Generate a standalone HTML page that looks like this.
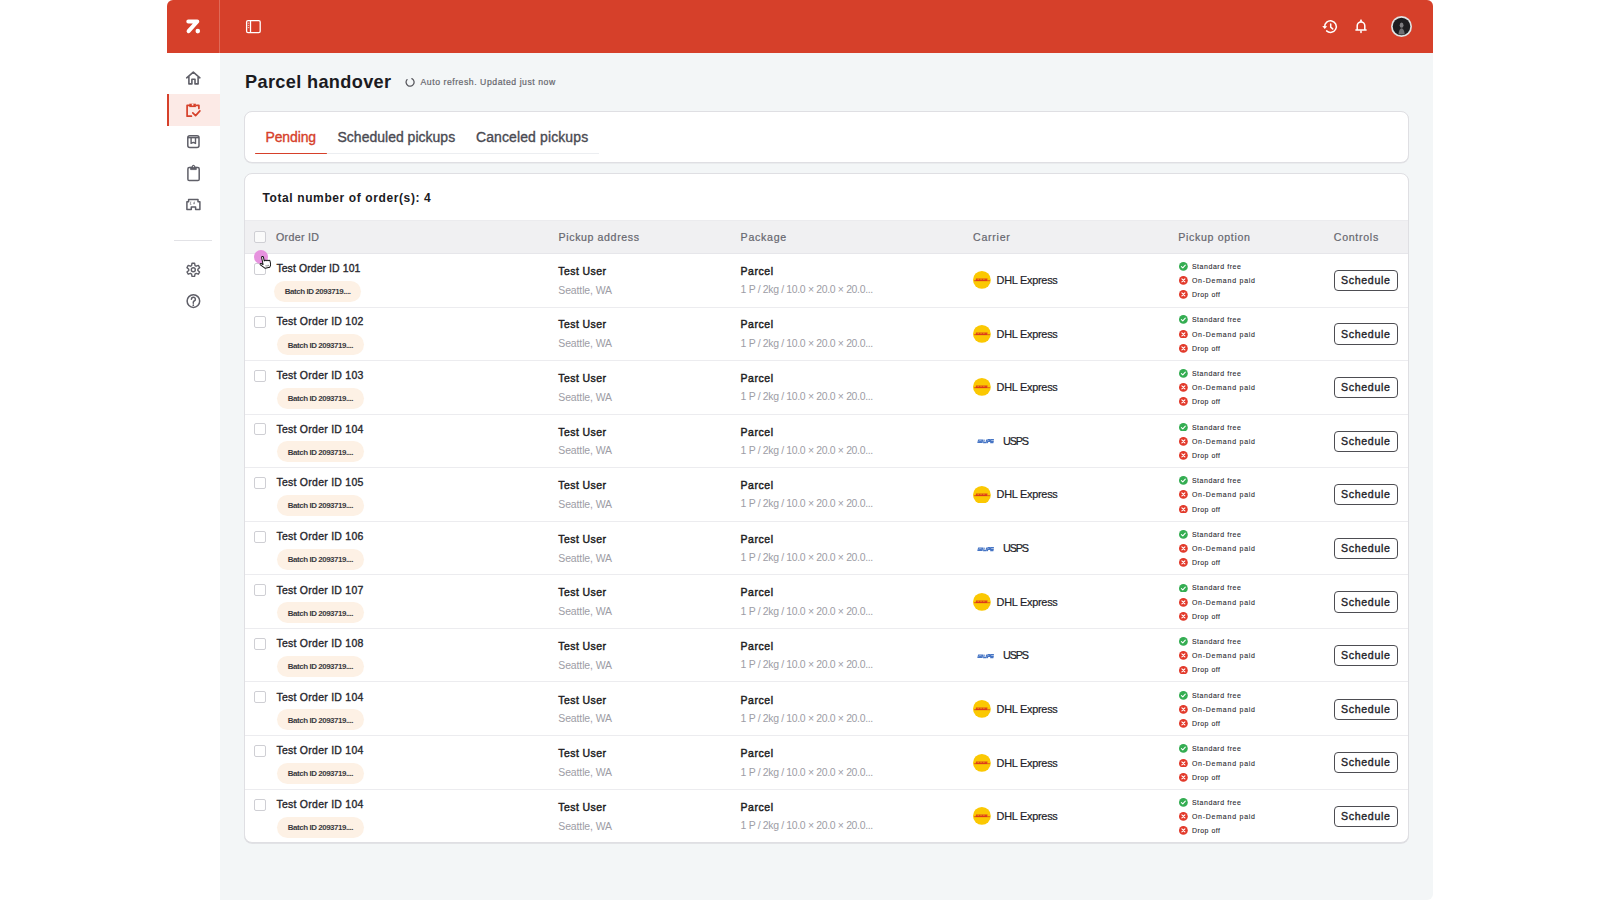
<!DOCTYPE html><html><head><meta charset="utf-8"><style>
*{margin:0;padding:0;box-sizing:border-box}
html,body{width:1600px;height:900px;overflow:hidden;background:#fff;font-family:"Liberation Sans",sans-serif}
.a{position:absolute}
.t{position:absolute;white-space:nowrap;line-height:1}
</style></head><body><div class="a" style="left:167px;top:0px;width:1266px;height:900px;background:#F3F6F7;border-radius:6px"></div><div class="a" style="left:167px;top:0px;width:1266px;height:53px;background:#D6402A;border-radius:6px 6px 0 0"></div><div class="a" style="left:219px;top:0px;width:1px;height:53px;background:rgba(255,255,255,0.22)"></div><div class="a" style="left:167px;top:53px;width:52.5px;height:847px;background:#fff"></div><div class="a" style="left:167px;top:94px;width:52.5px;height:32px;background:#FCEAE6"></div><div class="a" style="left:167px;top:94px;width:2px;height:32px;background:#D6402A"></div><div class="a" style="left:174px;top:240px;width:38px;height:1px;background:#e2e2e6"></div><div class="a" style="left:244px;top:111px;width:1164.5px;height:52px;background:#fff;border:1px solid #dfdfe3;border-radius:8px;box-shadow:0 0.6px 0 #e2e2e5"></div><div class="a" style="left:327px;top:153px;width:272px;height:1px;background:#eceef1"></div><div class="a" style="left:255px;top:152.6px;width:72px;height:1.6px;background:#D6402A;border-radius:1px"></div><div class="a" style="left:244px;top:173px;width:1164.5px;height:670px;background:#fff;border:1px solid #dfdfe3;border-radius:8px;overflow:hidden;box-shadow:0 0.8px 0 #dcdce0"></div><div class="a" style="left:245px;top:220px;width:1162.5px;height:33.5px;background:#F0F0F2;border-top:1px solid #ebebee;border-bottom:1px solid #e6e6ea"></div><div class="a" style="left:245px;top:306.55px;width:1162.5px;height:1px;background:#ececef"></div><div class="a" style="left:245px;top:360.1px;width:1162.5px;height:1px;background:#ececef"></div><div class="a" style="left:245px;top:413.65px;width:1162.5px;height:1px;background:#ececef"></div><div class="a" style="left:245px;top:467.2px;width:1162.5px;height:1px;background:#ececef"></div><div class="a" style="left:245px;top:520.75px;width:1162.5px;height:1px;background:#ececef"></div><div class="a" style="left:245px;top:574.3px;width:1162.5px;height:1px;background:#ececef"></div><div class="a" style="left:245px;top:627.8499999999999px;width:1162.5px;height:1px;background:#ececef"></div><div class="a" style="left:245px;top:681.4px;width:1162.5px;height:1px;background:#ececef"></div><div class="a" style="left:245px;top:734.95px;width:1162.5px;height:1px;background:#ececef"></div><div class="a" style="left:245px;top:788.5px;width:1162.5px;height:1px;background:#ececef"></div><div class="a" style="left:254px;top:231px;width:12px;height:12px;border:1px solid #cfcfd4;border-radius:2px;background:#fafafa"></div><div class="a" style="left:254px;top:262.5px;width:12px;height:12px;border:1px solid #cfcfd4;border-radius:2px;background:#fff"></div><div class="a" style="left:274.2px;top:280.5px;width:87px;height:21px;background:#FDF1E5;border-radius:11px"></div><svg class="a" style="left:973.2px;top:271.2px;" width="17.8" height="17.8" viewBox="0 0 17.8 17.8"><circle cx="8.9" cy="8.9" r="8.9" fill="#FBC802"/><path d="M1 9.7H17" stroke="#D9301E" stroke-width="0.7"/><path d="M3 7.6H14.6L14 9.9H2.6Z" fill="#D9301E" opacity="0.85"/><path d="M4.5 8.3H6M7.3 8.3H8.8M10.1 8.3H11.6" stroke="#FBC802" stroke-width="0.6"/></svg><svg class="a" style="left:1178.9px;top:261.8px;" width="8.8" height="8.8" viewBox="0 0 8.8 8.8"><circle cx="4.4" cy="4.4" r="4.4" fill="#34AD52"/><path d="M2.4 4.6L3.8 5.9L6.3 3.1" fill="none" stroke="#fff" stroke-width="1.1" stroke-linecap="round" stroke-linejoin="round"/></svg><svg class="a" style="left:1178.9px;top:276.0px;" width="8.8" height="8.8" viewBox="0 0 8.8 8.8"><circle cx="4.4" cy="4.4" r="4.4" fill="#E2392A"/><path d="M2.9 2.9L5.9 5.9M5.9 2.9L2.9 5.9" fill="none" stroke="#fff" stroke-width="1.1" stroke-linecap="round"/></svg><svg class="a" style="left:1178.9px;top:290.2px;" width="8.8" height="8.8" viewBox="0 0 8.8 8.8"><circle cx="4.4" cy="4.4" r="4.4" fill="#E2392A"/><path d="M2.9 2.9L5.9 5.9M5.9 2.9L2.9 5.9" fill="none" stroke="#fff" stroke-width="1.1" stroke-linecap="round"/></svg><div class="a" style="left:1333.5px;top:269.7px;width:64.3px;height:21.2px;border:1.2px solid #4d4d52;border-radius:4px;background:#fff"></div><div class="a" style="left:254px;top:316.12px;width:12px;height:12px;border:1px solid #cfcfd4;border-radius:2px;background:#fff"></div><div class="a" style="left:277px;top:334.12px;width:87px;height:21px;background:#FDF1E5;border-radius:11px"></div><svg class="a" style="left:973.2px;top:324.82px;" width="17.8" height="17.8" viewBox="0 0 17.8 17.8"><circle cx="8.9" cy="8.9" r="8.9" fill="#FBC802"/><path d="M1 9.7H17" stroke="#D9301E" stroke-width="0.7"/><path d="M3 7.6H14.6L14 9.9H2.6Z" fill="#D9301E" opacity="0.85"/><path d="M4.5 8.3H6M7.3 8.3H8.8M10.1 8.3H11.6" stroke="#FBC802" stroke-width="0.6"/></svg><svg class="a" style="left:1178.9px;top:315.42px;" width="8.8" height="8.8" viewBox="0 0 8.8 8.8"><circle cx="4.4" cy="4.4" r="4.4" fill="#34AD52"/><path d="M2.4 4.6L3.8 5.9L6.3 3.1" fill="none" stroke="#fff" stroke-width="1.1" stroke-linecap="round" stroke-linejoin="round"/></svg><svg class="a" style="left:1178.9px;top:329.62px;" width="8.8" height="8.8" viewBox="0 0 8.8 8.8"><circle cx="4.4" cy="4.4" r="4.4" fill="#E2392A"/><path d="M2.9 2.9L5.9 5.9M5.9 2.9L2.9 5.9" fill="none" stroke="#fff" stroke-width="1.1" stroke-linecap="round"/></svg><svg class="a" style="left:1178.9px;top:343.82px;" width="8.8" height="8.8" viewBox="0 0 8.8 8.8"><circle cx="4.4" cy="4.4" r="4.4" fill="#E2392A"/><path d="M2.9 2.9L5.9 5.9M5.9 2.9L2.9 5.9" fill="none" stroke="#fff" stroke-width="1.1" stroke-linecap="round"/></svg><div class="a" style="left:1333.5px;top:323.32px;width:64.3px;height:21.2px;border:1.2px solid #4d4d52;border-radius:4px;background:#fff"></div><div class="a" style="left:254px;top:369.74px;width:12px;height:12px;border:1px solid #cfcfd4;border-radius:2px;background:#fff"></div><div class="a" style="left:277px;top:387.74px;width:87px;height:21px;background:#FDF1E5;border-radius:11px"></div><svg class="a" style="left:973.2px;top:378.44px;" width="17.8" height="17.8" viewBox="0 0 17.8 17.8"><circle cx="8.9" cy="8.9" r="8.9" fill="#FBC802"/><path d="M1 9.7H17" stroke="#D9301E" stroke-width="0.7"/><path d="M3 7.6H14.6L14 9.9H2.6Z" fill="#D9301E" opacity="0.85"/><path d="M4.5 8.3H6M7.3 8.3H8.8M10.1 8.3H11.6" stroke="#FBC802" stroke-width="0.6"/></svg><svg class="a" style="left:1178.9px;top:369.04px;" width="8.8" height="8.8" viewBox="0 0 8.8 8.8"><circle cx="4.4" cy="4.4" r="4.4" fill="#34AD52"/><path d="M2.4 4.6L3.8 5.9L6.3 3.1" fill="none" stroke="#fff" stroke-width="1.1" stroke-linecap="round" stroke-linejoin="round"/></svg><svg class="a" style="left:1178.9px;top:383.24px;" width="8.8" height="8.8" viewBox="0 0 8.8 8.8"><circle cx="4.4" cy="4.4" r="4.4" fill="#E2392A"/><path d="M2.9 2.9L5.9 5.9M5.9 2.9L2.9 5.9" fill="none" stroke="#fff" stroke-width="1.1" stroke-linecap="round"/></svg><svg class="a" style="left:1178.9px;top:397.44px;" width="8.8" height="8.8" viewBox="0 0 8.8 8.8"><circle cx="4.4" cy="4.4" r="4.4" fill="#E2392A"/><path d="M2.9 2.9L5.9 5.9M5.9 2.9L2.9 5.9" fill="none" stroke="#fff" stroke-width="1.1" stroke-linecap="round"/></svg><div class="a" style="left:1333.5px;top:376.94px;width:64.3px;height:21.2px;border:1.2px solid #4d4d52;border-radius:4px;background:#fff"></div><div class="a" style="left:254px;top:423.36px;width:12px;height:12px;border:1px solid #cfcfd4;border-radius:2px;background:#fff"></div><div class="a" style="left:277px;top:441.36px;width:87px;height:21px;background:#FDF1E5;border-radius:11px"></div><svg class="a" style="left:976.5px;top:439.26px;" width="18" height="5" viewBox="0 0 18 5"><path d="M0.3 4.1L1.1 0.6H6.2L5.6 4.1Z" fill="#4574c4"/><path d="M1.5 2.3C2.3 1.5 3.6 1.4 4.6 1.9" stroke="#c9d6ee" stroke-width="0.6" fill="none"/><path d="M7.2 0.6L6.7 3.6H9.1L9.6 0.6M10.4 4.1L11 0.6H12.8L12.5 2.3H10.9M13.6 0.6H16.9M13.8 0.6L13.5 2.3H16.2L15.9 3.6H13.2" fill="none" stroke="#4574c4" stroke-width="1.15"/></svg><svg class="a" style="left:1178.9px;top:422.66px;" width="8.8" height="8.8" viewBox="0 0 8.8 8.8"><circle cx="4.4" cy="4.4" r="4.4" fill="#34AD52"/><path d="M2.4 4.6L3.8 5.9L6.3 3.1" fill="none" stroke="#fff" stroke-width="1.1" stroke-linecap="round" stroke-linejoin="round"/></svg><svg class="a" style="left:1178.9px;top:436.86px;" width="8.8" height="8.8" viewBox="0 0 8.8 8.8"><circle cx="4.4" cy="4.4" r="4.4" fill="#E2392A"/><path d="M2.9 2.9L5.9 5.9M5.9 2.9L2.9 5.9" fill="none" stroke="#fff" stroke-width="1.1" stroke-linecap="round"/></svg><svg class="a" style="left:1178.9px;top:451.06px;" width="8.8" height="8.8" viewBox="0 0 8.8 8.8"><circle cx="4.4" cy="4.4" r="4.4" fill="#E2392A"/><path d="M2.9 2.9L5.9 5.9M5.9 2.9L2.9 5.9" fill="none" stroke="#fff" stroke-width="1.1" stroke-linecap="round"/></svg><div class="a" style="left:1333.5px;top:430.56px;width:64.3px;height:21.2px;border:1.2px solid #4d4d52;border-radius:4px;background:#fff"></div><div class="a" style="left:254px;top:476.98px;width:12px;height:12px;border:1px solid #cfcfd4;border-radius:2px;background:#fff"></div><div class="a" style="left:277px;top:494.98px;width:87px;height:21px;background:#FDF1E5;border-radius:11px"></div><svg class="a" style="left:973.2px;top:485.68px;" width="17.8" height="17.8" viewBox="0 0 17.8 17.8"><circle cx="8.9" cy="8.9" r="8.9" fill="#FBC802"/><path d="M1 9.7H17" stroke="#D9301E" stroke-width="0.7"/><path d="M3 7.6H14.6L14 9.9H2.6Z" fill="#D9301E" opacity="0.85"/><path d="M4.5 8.3H6M7.3 8.3H8.8M10.1 8.3H11.6" stroke="#FBC802" stroke-width="0.6"/></svg><svg class="a" style="left:1178.9px;top:476.28000000000003px;" width="8.8" height="8.8" viewBox="0 0 8.8 8.8"><circle cx="4.4" cy="4.4" r="4.4" fill="#34AD52"/><path d="M2.4 4.6L3.8 5.9L6.3 3.1" fill="none" stroke="#fff" stroke-width="1.1" stroke-linecap="round" stroke-linejoin="round"/></svg><svg class="a" style="left:1178.9px;top:490.48px;" width="8.8" height="8.8" viewBox="0 0 8.8 8.8"><circle cx="4.4" cy="4.4" r="4.4" fill="#E2392A"/><path d="M2.9 2.9L5.9 5.9M5.9 2.9L2.9 5.9" fill="none" stroke="#fff" stroke-width="1.1" stroke-linecap="round"/></svg><svg class="a" style="left:1178.9px;top:504.68px;" width="8.8" height="8.8" viewBox="0 0 8.8 8.8"><circle cx="4.4" cy="4.4" r="4.4" fill="#E2392A"/><path d="M2.9 2.9L5.9 5.9M5.9 2.9L2.9 5.9" fill="none" stroke="#fff" stroke-width="1.1" stroke-linecap="round"/></svg><div class="a" style="left:1333.5px;top:484.18px;width:64.3px;height:21.2px;border:1.2px solid #4d4d52;border-radius:4px;background:#fff"></div><div class="a" style="left:254px;top:530.5999999999999px;width:12px;height:12px;border:1px solid #cfcfd4;border-radius:2px;background:#fff"></div><div class="a" style="left:277px;top:548.5999999999999px;width:87px;height:21px;background:#FDF1E5;border-radius:11px"></div><svg class="a" style="left:976.5px;top:546.4999999999999px;" width="18" height="5" viewBox="0 0 18 5"><path d="M0.3 4.1L1.1 0.6H6.2L5.6 4.1Z" fill="#4574c4"/><path d="M1.5 2.3C2.3 1.5 3.6 1.4 4.6 1.9" stroke="#c9d6ee" stroke-width="0.6" fill="none"/><path d="M7.2 0.6L6.7 3.6H9.1L9.6 0.6M10.4 4.1L11 0.6H12.8L12.5 2.3H10.9M13.6 0.6H16.9M13.8 0.6L13.5 2.3H16.2L15.9 3.6H13.2" fill="none" stroke="#4574c4" stroke-width="1.15"/></svg><svg class="a" style="left:1178.9px;top:529.8999999999999px;" width="8.8" height="8.8" viewBox="0 0 8.8 8.8"><circle cx="4.4" cy="4.4" r="4.4" fill="#34AD52"/><path d="M2.4 4.6L3.8 5.9L6.3 3.1" fill="none" stroke="#fff" stroke-width="1.1" stroke-linecap="round" stroke-linejoin="round"/></svg><svg class="a" style="left:1178.9px;top:544.0999999999999px;" width="8.8" height="8.8" viewBox="0 0 8.8 8.8"><circle cx="4.4" cy="4.4" r="4.4" fill="#E2392A"/><path d="M2.9 2.9L5.9 5.9M5.9 2.9L2.9 5.9" fill="none" stroke="#fff" stroke-width="1.1" stroke-linecap="round"/></svg><svg class="a" style="left:1178.9px;top:558.3px;" width="8.8" height="8.8" viewBox="0 0 8.8 8.8"><circle cx="4.4" cy="4.4" r="4.4" fill="#E2392A"/><path d="M2.9 2.9L5.9 5.9M5.9 2.9L2.9 5.9" fill="none" stroke="#fff" stroke-width="1.1" stroke-linecap="round"/></svg><div class="a" style="left:1333.5px;top:537.8px;width:64.3px;height:21.2px;border:1.2px solid #4d4d52;border-radius:4px;background:#fff"></div><div class="a" style="left:254px;top:584.22px;width:12px;height:12px;border:1px solid #cfcfd4;border-radius:2px;background:#fff"></div><div class="a" style="left:277px;top:602.22px;width:87px;height:21px;background:#FDF1E5;border-radius:11px"></div><svg class="a" style="left:973.2px;top:592.9200000000001px;" width="17.8" height="17.8" viewBox="0 0 17.8 17.8"><circle cx="8.9" cy="8.9" r="8.9" fill="#FBC802"/><path d="M1 9.7H17" stroke="#D9301E" stroke-width="0.7"/><path d="M3 7.6H14.6L14 9.9H2.6Z" fill="#D9301E" opacity="0.85"/><path d="M4.5 8.3H6M7.3 8.3H8.8M10.1 8.3H11.6" stroke="#FBC802" stroke-width="0.6"/></svg><svg class="a" style="left:1178.9px;top:583.52px;" width="8.8" height="8.8" viewBox="0 0 8.8 8.8"><circle cx="4.4" cy="4.4" r="4.4" fill="#34AD52"/><path d="M2.4 4.6L3.8 5.9L6.3 3.1" fill="none" stroke="#fff" stroke-width="1.1" stroke-linecap="round" stroke-linejoin="round"/></svg><svg class="a" style="left:1178.9px;top:597.72px;" width="8.8" height="8.8" viewBox="0 0 8.8 8.8"><circle cx="4.4" cy="4.4" r="4.4" fill="#E2392A"/><path d="M2.9 2.9L5.9 5.9M5.9 2.9L2.9 5.9" fill="none" stroke="#fff" stroke-width="1.1" stroke-linecap="round"/></svg><svg class="a" style="left:1178.9px;top:611.9200000000001px;" width="8.8" height="8.8" viewBox="0 0 8.8 8.8"><circle cx="4.4" cy="4.4" r="4.4" fill="#E2392A"/><path d="M2.9 2.9L5.9 5.9M5.9 2.9L2.9 5.9" fill="none" stroke="#fff" stroke-width="1.1" stroke-linecap="round"/></svg><div class="a" style="left:1333.5px;top:591.4200000000001px;width:64.3px;height:21.2px;border:1.2px solid #4d4d52;border-radius:4px;background:#fff"></div><div class="a" style="left:254px;top:637.8399999999999px;width:12px;height:12px;border:1px solid #cfcfd4;border-radius:2px;background:#fff"></div><div class="a" style="left:277px;top:655.8399999999999px;width:87px;height:21px;background:#FDF1E5;border-radius:11px"></div><svg class="a" style="left:976.5px;top:653.7399999999999px;" width="18" height="5" viewBox="0 0 18 5"><path d="M0.3 4.1L1.1 0.6H6.2L5.6 4.1Z" fill="#4574c4"/><path d="M1.5 2.3C2.3 1.5 3.6 1.4 4.6 1.9" stroke="#c9d6ee" stroke-width="0.6" fill="none"/><path d="M7.2 0.6L6.7 3.6H9.1L9.6 0.6M10.4 4.1L11 0.6H12.8L12.5 2.3H10.9M13.6 0.6H16.9M13.8 0.6L13.5 2.3H16.2L15.9 3.6H13.2" fill="none" stroke="#4574c4" stroke-width="1.15"/></svg><svg class="a" style="left:1178.9px;top:637.1399999999999px;" width="8.8" height="8.8" viewBox="0 0 8.8 8.8"><circle cx="4.4" cy="4.4" r="4.4" fill="#34AD52"/><path d="M2.4 4.6L3.8 5.9L6.3 3.1" fill="none" stroke="#fff" stroke-width="1.1" stroke-linecap="round" stroke-linejoin="round"/></svg><svg class="a" style="left:1178.9px;top:651.3399999999999px;" width="8.8" height="8.8" viewBox="0 0 8.8 8.8"><circle cx="4.4" cy="4.4" r="4.4" fill="#E2392A"/><path d="M2.9 2.9L5.9 5.9M5.9 2.9L2.9 5.9" fill="none" stroke="#fff" stroke-width="1.1" stroke-linecap="round"/></svg><svg class="a" style="left:1178.9px;top:665.54px;" width="8.8" height="8.8" viewBox="0 0 8.8 8.8"><circle cx="4.4" cy="4.4" r="4.4" fill="#E2392A"/><path d="M2.9 2.9L5.9 5.9M5.9 2.9L2.9 5.9" fill="none" stroke="#fff" stroke-width="1.1" stroke-linecap="round"/></svg><div class="a" style="left:1333.5px;top:645.04px;width:64.3px;height:21.2px;border:1.2px solid #4d4d52;border-radius:4px;background:#fff"></div><div class="a" style="left:254px;top:691.46px;width:12px;height:12px;border:1px solid #cfcfd4;border-radius:2px;background:#fff"></div><div class="a" style="left:277px;top:709.46px;width:87px;height:21px;background:#FDF1E5;border-radius:11px"></div><svg class="a" style="left:973.2px;top:700.1600000000001px;" width="17.8" height="17.8" viewBox="0 0 17.8 17.8"><circle cx="8.9" cy="8.9" r="8.9" fill="#FBC802"/><path d="M1 9.7H17" stroke="#D9301E" stroke-width="0.7"/><path d="M3 7.6H14.6L14 9.9H2.6Z" fill="#D9301E" opacity="0.85"/><path d="M4.5 8.3H6M7.3 8.3H8.8M10.1 8.3H11.6" stroke="#FBC802" stroke-width="0.6"/></svg><svg class="a" style="left:1178.9px;top:690.76px;" width="8.8" height="8.8" viewBox="0 0 8.8 8.8"><circle cx="4.4" cy="4.4" r="4.4" fill="#34AD52"/><path d="M2.4 4.6L3.8 5.9L6.3 3.1" fill="none" stroke="#fff" stroke-width="1.1" stroke-linecap="round" stroke-linejoin="round"/></svg><svg class="a" style="left:1178.9px;top:704.96px;" width="8.8" height="8.8" viewBox="0 0 8.8 8.8"><circle cx="4.4" cy="4.4" r="4.4" fill="#E2392A"/><path d="M2.9 2.9L5.9 5.9M5.9 2.9L2.9 5.9" fill="none" stroke="#fff" stroke-width="1.1" stroke-linecap="round"/></svg><svg class="a" style="left:1178.9px;top:719.1600000000001px;" width="8.8" height="8.8" viewBox="0 0 8.8 8.8"><circle cx="4.4" cy="4.4" r="4.4" fill="#E2392A"/><path d="M2.9 2.9L5.9 5.9M5.9 2.9L2.9 5.9" fill="none" stroke="#fff" stroke-width="1.1" stroke-linecap="round"/></svg><div class="a" style="left:1333.5px;top:698.6600000000001px;width:64.3px;height:21.2px;border:1.2px solid #4d4d52;border-radius:4px;background:#fff"></div><div class="a" style="left:254px;top:745.0799999999999px;width:12px;height:12px;border:1px solid #cfcfd4;border-radius:2px;background:#fff"></div><div class="a" style="left:277px;top:763.0799999999999px;width:87px;height:21px;background:#FDF1E5;border-radius:11px"></div><svg class="a" style="left:973.2px;top:753.78px;" width="17.8" height="17.8" viewBox="0 0 17.8 17.8"><circle cx="8.9" cy="8.9" r="8.9" fill="#FBC802"/><path d="M1 9.7H17" stroke="#D9301E" stroke-width="0.7"/><path d="M3 7.6H14.6L14 9.9H2.6Z" fill="#D9301E" opacity="0.85"/><path d="M4.5 8.3H6M7.3 8.3H8.8M10.1 8.3H11.6" stroke="#FBC802" stroke-width="0.6"/></svg><svg class="a" style="left:1178.9px;top:744.3799999999999px;" width="8.8" height="8.8" viewBox="0 0 8.8 8.8"><circle cx="4.4" cy="4.4" r="4.4" fill="#34AD52"/><path d="M2.4 4.6L3.8 5.9L6.3 3.1" fill="none" stroke="#fff" stroke-width="1.1" stroke-linecap="round" stroke-linejoin="round"/></svg><svg class="a" style="left:1178.9px;top:758.5799999999999px;" width="8.8" height="8.8" viewBox="0 0 8.8 8.8"><circle cx="4.4" cy="4.4" r="4.4" fill="#E2392A"/><path d="M2.9 2.9L5.9 5.9M5.9 2.9L2.9 5.9" fill="none" stroke="#fff" stroke-width="1.1" stroke-linecap="round"/></svg><svg class="a" style="left:1178.9px;top:772.78px;" width="8.8" height="8.8" viewBox="0 0 8.8 8.8"><circle cx="4.4" cy="4.4" r="4.4" fill="#E2392A"/><path d="M2.9 2.9L5.9 5.9M5.9 2.9L2.9 5.9" fill="none" stroke="#fff" stroke-width="1.1" stroke-linecap="round"/></svg><div class="a" style="left:1333.5px;top:752.28px;width:64.3px;height:21.2px;border:1.2px solid #4d4d52;border-radius:4px;background:#fff"></div><div class="a" style="left:254px;top:798.6999999999999px;width:12px;height:12px;border:1px solid #cfcfd4;border-radius:2px;background:#fff"></div><div class="a" style="left:277px;top:816.6999999999999px;width:87px;height:21px;background:#FDF1E5;border-radius:11px"></div><svg class="a" style="left:973.2px;top:807.4px;" width="17.8" height="17.8" viewBox="0 0 17.8 17.8"><circle cx="8.9" cy="8.9" r="8.9" fill="#FBC802"/><path d="M1 9.7H17" stroke="#D9301E" stroke-width="0.7"/><path d="M3 7.6H14.6L14 9.9H2.6Z" fill="#D9301E" opacity="0.85"/><path d="M4.5 8.3H6M7.3 8.3H8.8M10.1 8.3H11.6" stroke="#FBC802" stroke-width="0.6"/></svg><svg class="a" style="left:1178.9px;top:797.9999999999999px;" width="8.8" height="8.8" viewBox="0 0 8.8 8.8"><circle cx="4.4" cy="4.4" r="4.4" fill="#34AD52"/><path d="M2.4 4.6L3.8 5.9L6.3 3.1" fill="none" stroke="#fff" stroke-width="1.1" stroke-linecap="round" stroke-linejoin="round"/></svg><svg class="a" style="left:1178.9px;top:812.1999999999999px;" width="8.8" height="8.8" viewBox="0 0 8.8 8.8"><circle cx="4.4" cy="4.4" r="4.4" fill="#E2392A"/><path d="M2.9 2.9L5.9 5.9M5.9 2.9L2.9 5.9" fill="none" stroke="#fff" stroke-width="1.1" stroke-linecap="round"/></svg><svg class="a" style="left:1178.9px;top:826.4px;" width="8.8" height="8.8" viewBox="0 0 8.8 8.8"><circle cx="4.4" cy="4.4" r="4.4" fill="#E2392A"/><path d="M2.9 2.9L5.9 5.9M5.9 2.9L2.9 5.9" fill="none" stroke="#fff" stroke-width="1.1" stroke-linecap="round"/></svg><div class="a" style="left:1333.5px;top:805.9px;width:64.3px;height:21.2px;border:1.2px solid #4d4d52;border-radius:4px;background:#fff"></div><span class="t" style="left:245.00px;top:73.00px;font-size:18.16px;font-weight:700;color:#1b1b1f;letter-spacing:0.345px;">Parcel handover</span><span class="t" style="left:420.50px;top:78.00px;font-size:8.66px;font-weight:400;color:#66666d;letter-spacing:0.547px;-webkit-text-stroke:0.2px currentColor;">Auto refresh. Updated just now</span><span class="t" style="left:265.50px;top:131.00px;font-size:13.97px;font-weight:400;color:#D6402A;letter-spacing:-0.120px;-webkit-text-stroke:0.35px currentColor;">Pending</span><span class="t" style="left:337.50px;top:131.00px;font-size:13.97px;font-weight:400;color:#4a4a52;letter-spacing:0.022px;-webkit-text-stroke:0.35px currentColor;">Scheduled pickups</span><span class="t" style="left:476.00px;top:131.00px;font-size:13.97px;font-weight:400;color:#4a4a52;letter-spacing:0.124px;-webkit-text-stroke:0.35px currentColor;">Canceled pickups</span><span class="t" style="left:262.50px;top:192.00px;font-size:12.01px;font-weight:700;color:#1b1b1f;letter-spacing:0.606px;">Total number of order(s): 4</span><span class="t" style="left:276.00px;top:232.00px;font-size:10.61px;font-weight:400;color:#66666e;letter-spacing:0.330px;-webkit-text-stroke:0.2px currentColor;">Order ID</span><span class="t" style="left:558.60px;top:232.00px;font-size:10.61px;font-weight:400;color:#66666e;letter-spacing:0.604px;-webkit-text-stroke:0.2px currentColor;">Pickup address</span><span class="t" style="left:740.60px;top:232.00px;font-size:10.61px;font-weight:400;color:#66666e;letter-spacing:0.726px;-webkit-text-stroke:0.2px currentColor;">Package</span><span class="t" style="left:973.00px;top:232.00px;font-size:10.61px;font-weight:400;color:#66666e;letter-spacing:0.746px;-webkit-text-stroke:0.2px currentColor;">Carrier</span><span class="t" style="left:1178.20px;top:232.00px;font-size:10.61px;font-weight:400;color:#66666e;letter-spacing:0.675px;-webkit-text-stroke:0.2px currentColor;">Pickup option</span><span class="t" style="left:1333.80px;top:232.00px;font-size:10.61px;font-weight:400;color:#66666e;letter-spacing:0.698px;-webkit-text-stroke:0.2px currentColor;">Controls</span><span class="t" style="left:276.40px;top:264.00px;font-size:10.47px;font-weight:400;color:#28282e;letter-spacing:0.086px;-webkit-text-stroke:0.35px currentColor;">Test Order ID 101</span><span class="t" style="left:284.70px;top:288.00px;font-size:7.96px;font-weight:700;color:#3a3a40;letter-spacing:-0.425px;">Batch ID 2093719....</span><span class="t" style="left:558.30px;top:267.00px;font-size:10.47px;font-weight:400;color:#1f1f24;letter-spacing:0.435px;-webkit-text-stroke:0.45px currentColor;">Test User</span><span class="t" style="left:558.30px;top:286.00px;font-size:10.47px;font-weight:400;color:#9d9da5;letter-spacing:-0.119px;">Seattle, WA</span><span class="t" style="left:740.60px;top:267.00px;font-size:10.47px;font-weight:400;color:#1f1f24;letter-spacing:0.542px;-webkit-text-stroke:0.45px currentColor;">Parcel</span><span class="t" style="left:740.60px;top:285.00px;font-size:10.47px;font-weight:400;color:#9d9da5;letter-spacing:-0.343px;">1 P / 2kg / 10.0 × 20.0 × 20.0...</span><span class="t" style="left:996.60px;top:275.00px;font-size:10.89px;font-weight:400;color:#222228;letter-spacing:-0.247px;-webkit-text-stroke:0.2px currentColor;">DHL Express</span><span class="t" style="left:1191.90px;top:263.00px;font-size:6.98px;font-weight:400;color:#2a2a30;letter-spacing:0.564px;-webkit-text-stroke:0.1px currentColor;">Standard free</span><span class="t" style="left:1191.90px;top:277.00px;font-size:6.98px;font-weight:400;color:#2a2a30;letter-spacing:0.771px;-webkit-text-stroke:0.1px currentColor;">On-Demand paid</span><span class="t" style="left:1191.90px;top:291.00px;font-size:6.98px;font-weight:400;color:#2a2a30;letter-spacing:0.490px;-webkit-text-stroke:0.1px currentColor;">Drop off</span><span class="t" style="left:1341.00px;top:275.00px;font-size:10.61px;font-weight:400;color:#222228;letter-spacing:0.664px;-webkit-text-stroke:0.35px currentColor;">Schedule</span><span class="t" style="left:276.40px;top:317.00px;font-size:10.47px;font-weight:400;color:#28282e;letter-spacing:0.273px;-webkit-text-stroke:0.35px currentColor;">Test Order ID 102</span><span class="t" style="left:287.80px;top:342.00px;font-size:7.96px;font-weight:700;color:#3a3a40;letter-spacing:-0.452px;">Batch ID 2093719....</span><span class="t" style="left:558.30px;top:320.00px;font-size:10.47px;font-weight:400;color:#1f1f24;letter-spacing:0.435px;-webkit-text-stroke:0.45px currentColor;">Test User</span><span class="t" style="left:558.30px;top:339.00px;font-size:10.47px;font-weight:400;color:#9d9da5;letter-spacing:-0.119px;">Seattle, WA</span><span class="t" style="left:740.60px;top:320.00px;font-size:10.47px;font-weight:400;color:#1f1f24;letter-spacing:0.542px;-webkit-text-stroke:0.45px currentColor;">Parcel</span><span class="t" style="left:740.60px;top:339.00px;font-size:10.47px;font-weight:400;color:#9d9da5;letter-spacing:-0.343px;">1 P / 2kg / 10.0 × 20.0 × 20.0...</span><span class="t" style="left:996.60px;top:329.00px;font-size:10.89px;font-weight:400;color:#222228;letter-spacing:-0.247px;-webkit-text-stroke:0.2px currentColor;">DHL Express</span><span class="t" style="left:1191.90px;top:316.00px;font-size:6.98px;font-weight:400;color:#2a2a30;letter-spacing:0.564px;-webkit-text-stroke:0.1px currentColor;">Standard free</span><span class="t" style="left:1191.90px;top:331.00px;font-size:6.98px;font-weight:400;color:#2a2a30;letter-spacing:0.771px;-webkit-text-stroke:0.1px currentColor;">On-Demand paid</span><span class="t" style="left:1191.90px;top:345.00px;font-size:6.98px;font-weight:400;color:#2a2a30;letter-spacing:0.490px;-webkit-text-stroke:0.1px currentColor;">Drop off</span><span class="t" style="left:1341.00px;top:329.00px;font-size:10.61px;font-weight:400;color:#222228;letter-spacing:0.664px;-webkit-text-stroke:0.35px currentColor;">Schedule</span><span class="t" style="left:276.40px;top:371.00px;font-size:10.47px;font-weight:400;color:#28282e;letter-spacing:0.273px;-webkit-text-stroke:0.35px currentColor;">Test Order ID 103</span><span class="t" style="left:287.80px;top:395.00px;font-size:7.96px;font-weight:700;color:#3a3a40;letter-spacing:-0.452px;">Batch ID 2093719....</span><span class="t" style="left:558.30px;top:374.00px;font-size:10.47px;font-weight:400;color:#1f1f24;letter-spacing:0.435px;-webkit-text-stroke:0.45px currentColor;">Test User</span><span class="t" style="left:558.30px;top:393.00px;font-size:10.47px;font-weight:400;color:#9d9da5;letter-spacing:-0.119px;">Seattle, WA</span><span class="t" style="left:740.60px;top:374.00px;font-size:10.47px;font-weight:400;color:#1f1f24;letter-spacing:0.542px;-webkit-text-stroke:0.45px currentColor;">Parcel</span><span class="t" style="left:740.60px;top:392.00px;font-size:10.47px;font-weight:400;color:#9d9da5;letter-spacing:-0.343px;">1 P / 2kg / 10.0 × 20.0 × 20.0...</span><span class="t" style="left:996.60px;top:382.00px;font-size:10.89px;font-weight:400;color:#222228;letter-spacing:-0.247px;-webkit-text-stroke:0.2px currentColor;">DHL Express</span><span class="t" style="left:1191.90px;top:370.00px;font-size:6.98px;font-weight:400;color:#2a2a30;letter-spacing:0.564px;-webkit-text-stroke:0.1px currentColor;">Standard free</span><span class="t" style="left:1191.90px;top:384.00px;font-size:6.98px;font-weight:400;color:#2a2a30;letter-spacing:0.771px;-webkit-text-stroke:0.1px currentColor;">On-Demand paid</span><span class="t" style="left:1191.90px;top:398.00px;font-size:6.98px;font-weight:400;color:#2a2a30;letter-spacing:0.490px;-webkit-text-stroke:0.1px currentColor;">Drop off</span><span class="t" style="left:1341.00px;top:382.00px;font-size:10.61px;font-weight:400;color:#222228;letter-spacing:0.664px;-webkit-text-stroke:0.35px currentColor;">Schedule</span><span class="t" style="left:276.40px;top:425.00px;font-size:10.47px;font-weight:400;color:#28282e;letter-spacing:0.273px;-webkit-text-stroke:0.35px currentColor;">Test Order ID 104</span><span class="t" style="left:287.80px;top:449.00px;font-size:7.96px;font-weight:700;color:#3a3a40;letter-spacing:-0.452px;">Batch ID 2093719....</span><span class="t" style="left:558.30px;top:428.00px;font-size:10.47px;font-weight:400;color:#1f1f24;letter-spacing:0.435px;-webkit-text-stroke:0.45px currentColor;">Test User</span><span class="t" style="left:558.30px;top:446.00px;font-size:10.47px;font-weight:400;color:#9d9da5;letter-spacing:-0.119px;">Seattle, WA</span><span class="t" style="left:740.60px;top:428.00px;font-size:10.47px;font-weight:400;color:#1f1f24;letter-spacing:0.542px;-webkit-text-stroke:0.45px currentColor;">Parcel</span><span class="t" style="left:740.60px;top:446.00px;font-size:10.47px;font-weight:400;color:#9d9da5;letter-spacing:-0.343px;">1 P / 2kg / 10.0 × 20.0 × 20.0...</span><span class="t" style="left:1003.00px;top:436.00px;font-size:10.89px;font-weight:400;color:#222228;letter-spacing:-1.208px;-webkit-text-stroke:0.2px currentColor;">USPS</span><span class="t" style="left:1191.90px;top:424.00px;font-size:6.98px;font-weight:400;color:#2a2a30;letter-spacing:0.564px;-webkit-text-stroke:0.1px currentColor;">Standard free</span><span class="t" style="left:1191.90px;top:438.00px;font-size:6.98px;font-weight:400;color:#2a2a30;letter-spacing:0.771px;-webkit-text-stroke:0.1px currentColor;">On-Demand paid</span><span class="t" style="left:1191.90px;top:452.00px;font-size:6.98px;font-weight:400;color:#2a2a30;letter-spacing:0.490px;-webkit-text-stroke:0.1px currentColor;">Drop off</span><span class="t" style="left:1341.00px;top:436.00px;font-size:10.61px;font-weight:400;color:#222228;letter-spacing:0.664px;-webkit-text-stroke:0.35px currentColor;">Schedule</span><span class="t" style="left:276.40px;top:478.00px;font-size:10.47px;font-weight:400;color:#28282e;letter-spacing:0.273px;-webkit-text-stroke:0.35px currentColor;">Test Order ID 105</span><span class="t" style="left:287.80px;top:502.00px;font-size:7.96px;font-weight:700;color:#3a3a40;letter-spacing:-0.452px;">Batch ID 2093719....</span><span class="t" style="left:558.30px;top:481.00px;font-size:10.47px;font-weight:400;color:#1f1f24;letter-spacing:0.435px;-webkit-text-stroke:0.45px currentColor;">Test User</span><span class="t" style="left:558.30px;top:500.00px;font-size:10.47px;font-weight:400;color:#9d9da5;letter-spacing:-0.119px;">Seattle, WA</span><span class="t" style="left:740.60px;top:481.00px;font-size:10.47px;font-weight:400;color:#1f1f24;letter-spacing:0.542px;-webkit-text-stroke:0.45px currentColor;">Parcel</span><span class="t" style="left:740.60px;top:499.00px;font-size:10.47px;font-weight:400;color:#9d9da5;letter-spacing:-0.343px;">1 P / 2kg / 10.0 × 20.0 × 20.0...</span><span class="t" style="left:996.60px;top:489.00px;font-size:10.89px;font-weight:400;color:#222228;letter-spacing:-0.247px;-webkit-text-stroke:0.2px currentColor;">DHL Express</span><span class="t" style="left:1191.90px;top:477.00px;font-size:6.98px;font-weight:400;color:#2a2a30;letter-spacing:0.564px;-webkit-text-stroke:0.1px currentColor;">Standard free</span><span class="t" style="left:1191.90px;top:491.00px;font-size:6.98px;font-weight:400;color:#2a2a30;letter-spacing:0.771px;-webkit-text-stroke:0.1px currentColor;">On-Demand paid</span><span class="t" style="left:1191.90px;top:506.00px;font-size:6.98px;font-weight:400;color:#2a2a30;letter-spacing:0.490px;-webkit-text-stroke:0.1px currentColor;">Drop off</span><span class="t" style="left:1341.00px;top:489.00px;font-size:10.61px;font-weight:400;color:#222228;letter-spacing:0.664px;-webkit-text-stroke:0.35px currentColor;">Schedule</span><span class="t" style="left:276.40px;top:532.00px;font-size:10.47px;font-weight:400;color:#28282e;letter-spacing:0.273px;-webkit-text-stroke:0.35px currentColor;">Test Order ID 106</span><span class="t" style="left:287.80px;top:556.00px;font-size:7.96px;font-weight:700;color:#3a3a40;letter-spacing:-0.452px;">Batch ID 2093719....</span><span class="t" style="left:558.30px;top:535.00px;font-size:10.47px;font-weight:400;color:#1f1f24;letter-spacing:0.435px;-webkit-text-stroke:0.45px currentColor;">Test User</span><span class="t" style="left:558.30px;top:554.00px;font-size:10.47px;font-weight:400;color:#9d9da5;letter-spacing:-0.119px;">Seattle, WA</span><span class="t" style="left:740.60px;top:535.00px;font-size:10.47px;font-weight:400;color:#1f1f24;letter-spacing:0.542px;-webkit-text-stroke:0.45px currentColor;">Parcel</span><span class="t" style="left:740.60px;top:553.00px;font-size:10.47px;font-weight:400;color:#9d9da5;letter-spacing:-0.343px;">1 P / 2kg / 10.0 × 20.0 × 20.0...</span><span class="t" style="left:1003.00px;top:543.00px;font-size:10.89px;font-weight:400;color:#222228;letter-spacing:-1.208px;-webkit-text-stroke:0.2px currentColor;">USPS</span><span class="t" style="left:1191.90px;top:531.00px;font-size:6.98px;font-weight:400;color:#2a2a30;letter-spacing:0.564px;-webkit-text-stroke:0.1px currentColor;">Standard free</span><span class="t" style="left:1191.90px;top:545.00px;font-size:6.98px;font-weight:400;color:#2a2a30;letter-spacing:0.771px;-webkit-text-stroke:0.1px currentColor;">On-Demand paid</span><span class="t" style="left:1191.90px;top:559.00px;font-size:6.98px;font-weight:400;color:#2a2a30;letter-spacing:0.490px;-webkit-text-stroke:0.1px currentColor;">Drop off</span><span class="t" style="left:1341.00px;top:543.00px;font-size:10.61px;font-weight:400;color:#222228;letter-spacing:0.664px;-webkit-text-stroke:0.35px currentColor;">Schedule</span><span class="t" style="left:276.40px;top:586.00px;font-size:10.47px;font-weight:400;color:#28282e;letter-spacing:0.273px;-webkit-text-stroke:0.35px currentColor;">Test Order ID 107</span><span class="t" style="left:287.80px;top:610.00px;font-size:7.96px;font-weight:700;color:#3a3a40;letter-spacing:-0.452px;">Batch ID 2093719....</span><span class="t" style="left:558.30px;top:588.00px;font-size:10.47px;font-weight:400;color:#1f1f24;letter-spacing:0.435px;-webkit-text-stroke:0.45px currentColor;">Test User</span><span class="t" style="left:558.30px;top:607.00px;font-size:10.47px;font-weight:400;color:#9d9da5;letter-spacing:-0.119px;">Seattle, WA</span><span class="t" style="left:740.60px;top:588.00px;font-size:10.47px;font-weight:400;color:#1f1f24;letter-spacing:0.542px;-webkit-text-stroke:0.45px currentColor;">Parcel</span><span class="t" style="left:740.60px;top:607.00px;font-size:10.47px;font-weight:400;color:#9d9da5;letter-spacing:-0.343px;">1 P / 2kg / 10.0 × 20.0 × 20.0...</span><span class="t" style="left:996.60px;top:597.00px;font-size:10.89px;font-weight:400;color:#222228;letter-spacing:-0.247px;-webkit-text-stroke:0.2px currentColor;">DHL Express</span><span class="t" style="left:1191.90px;top:584.00px;font-size:6.98px;font-weight:400;color:#2a2a30;letter-spacing:0.564px;-webkit-text-stroke:0.1px currentColor;">Standard free</span><span class="t" style="left:1191.90px;top:599.00px;font-size:6.98px;font-weight:400;color:#2a2a30;letter-spacing:0.771px;-webkit-text-stroke:0.1px currentColor;">On-Demand paid</span><span class="t" style="left:1191.90px;top:613.00px;font-size:6.98px;font-weight:400;color:#2a2a30;letter-spacing:0.490px;-webkit-text-stroke:0.1px currentColor;">Drop off</span><span class="t" style="left:1341.00px;top:597.00px;font-size:10.61px;font-weight:400;color:#222228;letter-spacing:0.664px;-webkit-text-stroke:0.35px currentColor;">Schedule</span><span class="t" style="left:276.40px;top:639.00px;font-size:10.47px;font-weight:400;color:#28282e;letter-spacing:0.273px;-webkit-text-stroke:0.35px currentColor;">Test Order ID 108</span><span class="t" style="left:287.80px;top:663.00px;font-size:7.96px;font-weight:700;color:#3a3a40;letter-spacing:-0.452px;">Batch ID 2093719....</span><span class="t" style="left:558.30px;top:642.00px;font-size:10.47px;font-weight:400;color:#1f1f24;letter-spacing:0.435px;-webkit-text-stroke:0.45px currentColor;">Test User</span><span class="t" style="left:558.30px;top:661.00px;font-size:10.47px;font-weight:400;color:#9d9da5;letter-spacing:-0.119px;">Seattle, WA</span><span class="t" style="left:740.60px;top:642.00px;font-size:10.47px;font-weight:400;color:#1f1f24;letter-spacing:0.542px;-webkit-text-stroke:0.45px currentColor;">Parcel</span><span class="t" style="left:740.60px;top:660.00px;font-size:10.47px;font-weight:400;color:#9d9da5;letter-spacing:-0.343px;">1 P / 2kg / 10.0 × 20.0 × 20.0...</span><span class="t" style="left:1003.00px;top:650.00px;font-size:10.89px;font-weight:400;color:#222228;letter-spacing:-1.208px;-webkit-text-stroke:0.2px currentColor;">USPS</span><span class="t" style="left:1191.90px;top:638.00px;font-size:6.98px;font-weight:400;color:#2a2a30;letter-spacing:0.564px;-webkit-text-stroke:0.1px currentColor;">Standard free</span><span class="t" style="left:1191.90px;top:652.00px;font-size:6.98px;font-weight:400;color:#2a2a30;letter-spacing:0.771px;-webkit-text-stroke:0.1px currentColor;">On-Demand paid</span><span class="t" style="left:1191.90px;top:666.00px;font-size:6.98px;font-weight:400;color:#2a2a30;letter-spacing:0.490px;-webkit-text-stroke:0.1px currentColor;">Drop off</span><span class="t" style="left:1341.00px;top:650.00px;font-size:10.61px;font-weight:400;color:#222228;letter-spacing:0.664px;-webkit-text-stroke:0.35px currentColor;">Schedule</span><span class="t" style="left:276.40px;top:693.00px;font-size:10.47px;font-weight:400;color:#28282e;letter-spacing:0.273px;-webkit-text-stroke:0.35px currentColor;">Test Order ID 104</span><span class="t" style="left:287.80px;top:717.00px;font-size:7.96px;font-weight:700;color:#3a3a40;letter-spacing:-0.452px;">Batch ID 2093719....</span><span class="t" style="left:558.30px;top:696.00px;font-size:10.47px;font-weight:400;color:#1f1f24;letter-spacing:0.435px;-webkit-text-stroke:0.45px currentColor;">Test User</span><span class="t" style="left:558.30px;top:714.00px;font-size:10.47px;font-weight:400;color:#9d9da5;letter-spacing:-0.119px;">Seattle, WA</span><span class="t" style="left:740.60px;top:696.00px;font-size:10.47px;font-weight:400;color:#1f1f24;letter-spacing:0.542px;-webkit-text-stroke:0.45px currentColor;">Parcel</span><span class="t" style="left:740.60px;top:714.00px;font-size:10.47px;font-weight:400;color:#9d9da5;letter-spacing:-0.343px;">1 P / 2kg / 10.0 × 20.0 × 20.0...</span><span class="t" style="left:996.60px;top:704.00px;font-size:10.89px;font-weight:400;color:#222228;letter-spacing:-0.247px;-webkit-text-stroke:0.2px currentColor;">DHL Express</span><span class="t" style="left:1191.90px;top:692.00px;font-size:6.98px;font-weight:400;color:#2a2a30;letter-spacing:0.564px;-webkit-text-stroke:0.1px currentColor;">Standard free</span><span class="t" style="left:1191.90px;top:706.00px;font-size:6.98px;font-weight:400;color:#2a2a30;letter-spacing:0.771px;-webkit-text-stroke:0.1px currentColor;">On-Demand paid</span><span class="t" style="left:1191.90px;top:720.00px;font-size:6.98px;font-weight:400;color:#2a2a30;letter-spacing:0.490px;-webkit-text-stroke:0.1px currentColor;">Drop off</span><span class="t" style="left:1341.00px;top:704.00px;font-size:10.61px;font-weight:400;color:#222228;letter-spacing:0.664px;-webkit-text-stroke:0.35px currentColor;">Schedule</span><span class="t" style="left:276.40px;top:746.00px;font-size:10.47px;font-weight:400;color:#28282e;letter-spacing:0.273px;-webkit-text-stroke:0.35px currentColor;">Test Order ID 104</span><span class="t" style="left:287.80px;top:770.00px;font-size:7.96px;font-weight:700;color:#3a3a40;letter-spacing:-0.452px;">Batch ID 2093719....</span><span class="t" style="left:558.30px;top:749.00px;font-size:10.47px;font-weight:400;color:#1f1f24;letter-spacing:0.435px;-webkit-text-stroke:0.45px currentColor;">Test User</span><span class="t" style="left:558.30px;top:768.00px;font-size:10.47px;font-weight:400;color:#9d9da5;letter-spacing:-0.119px;">Seattle, WA</span><span class="t" style="left:740.60px;top:749.00px;font-size:10.47px;font-weight:400;color:#1f1f24;letter-spacing:0.542px;-webkit-text-stroke:0.45px currentColor;">Parcel</span><span class="t" style="left:740.60px;top:768.00px;font-size:10.47px;font-weight:400;color:#9d9da5;letter-spacing:-0.343px;">1 P / 2kg / 10.0 × 20.0 × 20.0...</span><span class="t" style="left:996.60px;top:758.00px;font-size:10.89px;font-weight:400;color:#222228;letter-spacing:-0.247px;-webkit-text-stroke:0.2px currentColor;">DHL Express</span><span class="t" style="left:1191.90px;top:745.00px;font-size:6.98px;font-weight:400;color:#2a2a30;letter-spacing:0.564px;-webkit-text-stroke:0.1px currentColor;">Standard free</span><span class="t" style="left:1191.90px;top:760.00px;font-size:6.98px;font-weight:400;color:#2a2a30;letter-spacing:0.771px;-webkit-text-stroke:0.1px currentColor;">On-Demand paid</span><span class="t" style="left:1191.90px;top:774.00px;font-size:6.98px;font-weight:400;color:#2a2a30;letter-spacing:0.490px;-webkit-text-stroke:0.1px currentColor;">Drop off</span><span class="t" style="left:1341.00px;top:757.00px;font-size:10.61px;font-weight:400;color:#222228;letter-spacing:0.664px;-webkit-text-stroke:0.35px currentColor;">Schedule</span><span class="t" style="left:276.40px;top:800.00px;font-size:10.47px;font-weight:400;color:#28282e;letter-spacing:0.273px;-webkit-text-stroke:0.35px currentColor;">Test Order ID 104</span><span class="t" style="left:287.80px;top:824.00px;font-size:7.96px;font-weight:700;color:#3a3a40;letter-spacing:-0.452px;">Batch ID 2093719....</span><span class="t" style="left:558.30px;top:803.00px;font-size:10.47px;font-weight:400;color:#1f1f24;letter-spacing:0.435px;-webkit-text-stroke:0.45px currentColor;">Test User</span><span class="t" style="left:558.30px;top:822.00px;font-size:10.47px;font-weight:400;color:#9d9da5;letter-spacing:-0.119px;">Seattle, WA</span><span class="t" style="left:740.60px;top:803.00px;font-size:10.47px;font-weight:400;color:#1f1f24;letter-spacing:0.542px;-webkit-text-stroke:0.45px currentColor;">Parcel</span><span class="t" style="left:740.60px;top:821.00px;font-size:10.47px;font-weight:400;color:#9d9da5;letter-spacing:-0.343px;">1 P / 2kg / 10.0 × 20.0 × 20.0...</span><span class="t" style="left:996.60px;top:811.00px;font-size:10.89px;font-weight:400;color:#222228;letter-spacing:-0.247px;-webkit-text-stroke:0.2px currentColor;">DHL Express</span><span class="t" style="left:1191.90px;top:799.00px;font-size:6.98px;font-weight:400;color:#2a2a30;letter-spacing:0.564px;-webkit-text-stroke:0.1px currentColor;">Standard free</span><span class="t" style="left:1191.90px;top:813.00px;font-size:6.98px;font-weight:400;color:#2a2a30;letter-spacing:0.771px;-webkit-text-stroke:0.1px currentColor;">On-Demand paid</span><span class="t" style="left:1191.90px;top:827.00px;font-size:6.98px;font-weight:400;color:#2a2a30;letter-spacing:0.490px;-webkit-text-stroke:0.1px currentColor;">Drop off</span><span class="t" style="left:1341.00px;top:811.00px;font-size:10.61px;font-weight:400;color:#222228;letter-spacing:0.664px;-webkit-text-stroke:0.35px currentColor;">Schedule</span><svg class="a" style="left:184px;top:17px;" width="18" height="18" viewBox="0 0 18 18"><path d="M4.3 4.5H13.3L4.6 14.2" fill="none" stroke="#fff" stroke-width="4" stroke-linecap="round" stroke-linejoin="round"/><circle cx="13.8" cy="14.1" r="2.3" fill="#fff"/></svg><svg class="a" style="left:244px;top:18px;" width="18" height="17" viewBox="0 0 18 17"><rect x="2.6" y="2.6" width="13.6" height="12" rx="1.4" fill="none" stroke="#fff" stroke-width="1.3"/><path d="M6.5 2.6V14.6" stroke="#fff" stroke-width="1.3"/><path d="M3.8 5.2H5.2M3.8 7.4H5.2M3.8 9.6H5.2" stroke="#fff" stroke-width="0.9" opacity="0.8"/></svg><svg class="a" style="left:1320.6px;top:18px;" width="18" height="17" viewBox="0 0 18 17"><path d="M3.7 8.9A5.8 5.8 0 1 1 5.6 12.9" fill="none" stroke="#fff" stroke-width="1.5" stroke-linecap="round"/><path d="M1.2 8.1L3.7 11.1L6.2 8.2Z" fill="#fff"/><path d="M9.7 6.1V9.1L11.7 10.9" fill="none" stroke="#fff" stroke-width="1.5" stroke-linecap="round" stroke-linejoin="round"/></svg><svg class="a" style="left:1352px;top:17px;" width="18" height="18" viewBox="0 0 18 18"><path d="M5.2 13.1V8.7A3.8 3.8 0 0 1 12.8 8.7V13.1M3.9 13.1H14.1" fill="none" stroke="#fff" stroke-width="1.5" stroke-linecap="round" stroke-linejoin="round"/><path d="M8.1 4.4L9 2.6L9.9 4.4Z" fill="#fff" stroke="#fff" stroke-width="0.8" stroke-linejoin="round"/><path d="M9 14V15.6" stroke="#fff" stroke-width="1.5" stroke-linecap="round"/></svg><div class="a" style="left:1391px;top:16px;width:21px;height:21px;background:#dfe3e3;border-radius:50%"></div><svg class="a" style="left:1391px;top:16px;" width="21" height="21" viewBox="0 0 21 21"><circle cx="10.5" cy="10.5" r="8.8" fill="#1d1e21"/><ellipse cx="10.6" cy="9.2" rx="1.9" ry="2.6" fill="#7d7d80"/><path d="M7.4 18.6C7.8 14.6 9 12.4 10.6 12.2C12.2 12.4 13.4 14.6 13.8 18.6Z" fill="#6e6e71"/></svg><svg class="a" style="left:183px;top:68px;" width="20" height="20" viewBox="0 0 20 20"><path d="M3.7 9.8L10.3 4.2L16.9 9.8M5.9 8.3V15.9H8.9V11.3H12V15.9H15.1V8.3" fill="none" stroke="#5f5f68" stroke-width="1.6" stroke-linejoin="round" stroke-linecap="round"/></svg><svg class="a" style="left:183px;top:100px;" width="20" height="20" viewBox="0 0 20 20"><path d="M8.4 16.2H4.1V5.4H6.3M13.7 5.4H15.9V8.4" fill="none" stroke="#D6402A" stroke-width="1.7" stroke-linecap="round" stroke-linejoin="round"/><path d="M6.3 3.7H12.9V7.1H6.3Z" fill="#D6402A"/><circle cx="9.6" cy="4.7" r="0.9" fill="#FCEAE6"/><path d="M9.8 12.9L12.6 15.6L16.9 10.9" fill="none" stroke="#D6402A" stroke-width="1.7" stroke-linecap="round" stroke-linejoin="round"/></svg><svg class="a" style="left:183px;top:131px;" width="20" height="20" viewBox="0 0 20 20"><rect x="4.8" y="4.8" width="11.2" height="11.6" rx="2" fill="none" stroke="#5f5f68" stroke-width="1.5"/><path d="M4.8 6.6H16" stroke="#5f5f68" stroke-width="1.5"/><path d="M8.1 6.4V12.4L10.3 11.4L12.5 12.4V6.4" fill="none" stroke="#5f5f68" stroke-width="1.4" stroke-linejoin="round"/></svg><svg class="a" style="left:183px;top:163px;" width="20" height="20" viewBox="0 0 20 20"><rect x="4.9" y="4.6" width="11.3" height="12.9" rx="1.3" fill="none" stroke="#5f5f68" stroke-width="1.5"/><path d="M7.6 4.1H13.3V6.6H7.6Z" fill="#5f5f68" stroke="#5f5f68" stroke-width="0.8" stroke-linejoin="round"/><circle cx="10.45" cy="3.3" r="1.5" fill="#5f5f68"/><circle cx="10.45" cy="3.6" r="0.6" fill="#fff"/></svg><svg class="a" style="left:183px;top:195px;" width="20" height="20" viewBox="0 0 20 20"><path d="M3.9 6.8H5.6V4.6H15V6.8H16.9V14.6H12.6V12H8.3V14.6H3.9Z" fill="none" stroke="#5f5f68" stroke-width="1.5" stroke-linejoin="round"/><path d="M7.8 6.5L7.2 9.4M8.4 9.4H7.2M11.4 6.6L11 9.3M10.2 8.2H12" stroke="#5f5f68" stroke-width="0.8" opacity=".75"/></svg><svg class="a" style="left:183px;top:260px;" width="20" height="20" viewBox="0 0 20 20"><path d="M8.58 5.53 L9.02 3.22 L11.58 3.22 L12.02 5.53 L13.13 6.18 L15.36 5.40 L16.63 7.62 L14.86 9.16 L14.86 10.44 L16.63 11.98 L15.36 14.20 L13.13 13.42 L12.02 14.07 L11.58 16.38 L9.02 16.38 L8.58 14.07 L7.47 13.42 L5.24 14.20 L3.97 11.98 L5.74 10.44 L5.74 9.16 L3.97 7.62 L5.24 5.40 L7.47 6.18Z" fill="none" stroke="#5f5f68" stroke-width="1.4" stroke-linejoin="round"/><circle cx="10.3" cy="9.8" r="2" fill="none" stroke="#5f5f68" stroke-width="1.4"/></svg><svg class="a" style="left:183px;top:291px;" width="20" height="20" viewBox="0 0 20 20"><circle cx="10.4" cy="10.1" r="6.3" fill="none" stroke="#5f5f68" stroke-width="1.5"/><path d="M8.4 8.2A2 2 0 1 1 11.2 10.0C10.6 10.3 10.3 10.9 10.3 11.5V12.3" fill="none" stroke="#5f5f68" stroke-width="1.5" stroke-linecap="round"/><circle cx="10.3" cy="14.2" r="0.85" fill="#5f5f68"/></svg><svg class="a" style="left:404px;top:76px;" width="11" height="11" viewBox="0 0 11 11"><defs><linearGradient id="sg" x1="0" y1="0" x2="1" y2="1"><stop offset="0" stop-color="#ddd"/><stop offset="1" stop-color="#555"/></linearGradient></defs><path d="M7.9 2.6A4 4 0 1 1 3.0 3.6" fill="none" stroke="#5a5a60" stroke-width="1.3" stroke-linecap="round"/></svg><div class="a" style="left:254px;top:250.4px;width:14px;height:14px;background:#E692DE;border-radius:50%"></div><svg class="a" style="left:258px;top:255px;" width="14" height="14" viewBox="0 0 14 14"><g transform="rotate(-12 7 7)"><path d="M4.6 1.9C4.6 0.8 6.5 0.8 6.5 1.9V5.9C6.7 5.1 8.3 5.1 8.4 6.1C8.6 5.4 10.2 5.5 10.3 6.4C10.6 5.8 12.1 5.9 12.1 6.9V9.8C12.1 11.3 11.3 12.4 10.5 13.2H5.9L1.9 8.8C1.4 8.2 2.0 7.3 2.8 7.7L4.6 9Z" fill="#fff" stroke="#111" stroke-width="0.95" stroke-linejoin="round"/><path d="M7.2 10.4V11.8M8.4 10.4V11.8M9.6 10.4V11.8" stroke="#555" stroke-width="0.6"/></g></svg></body></html>
